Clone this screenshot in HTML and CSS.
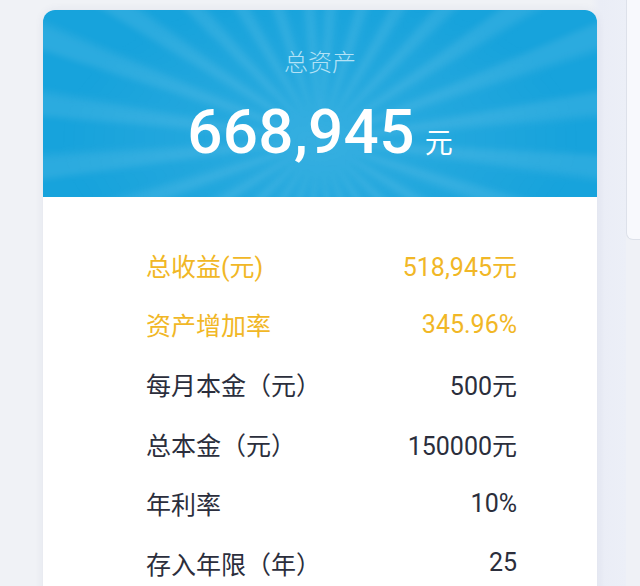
FILE: index.html
```html
<!DOCTYPE html>
<html lang="zh">
<head>
<meta charset="utf-8">
<title>总资产</title>
<link rel="stylesheet" href="styles.css">
</head>
<body>
<div class="page">
  <main class="main">
    <section class="card">
      <header class="hero">
        <div class="hero-title">总资产</div>
        <div class="hero-amount"><span class="num">668,945</span><span class="unit">元</span></div>
      </header>
      <div class="rows">
        <div class="row gold"><span class="label">总收益(元)</span><span class="value">518,945元</span></div>
        <div class="row gold"><span class="label">资产增加率</span><span class="value">345.96%</span></div>
        <div class="row"><span class="label">每月本金（元）</span><span class="value">500元</span></div>
        <div class="row"><span class="label">总本金（元）</span><span class="value">150000元</span></div>
        <div class="row"><span class="label">年利率</span><span class="value">10%</span></div>
        <div class="row"><span class="label">存入年限（年）</span><span class="value">25</span></div>
      </div>
    </section>
  </main>
  <aside class="side"></aside>
</div>
</body>
</html>
```

FILE: styles.css
```css
html, body {
  margin: 0;
  padding: 0;
}
body {
  background: #eff1f6;
  font-family: "Roboto", "Noto Sans CJK SC", sans-serif;
  height: 586px;
  overflow: hidden;
}
.page {
  display: flex;
  height: 586px;
}
.main {
  width: 626px;
  flex: none;
  background: linear-gradient(to right, #f0f2f6 0, #f0f2f6 590px, #eaedf6 600px, #eceff7 626px);
  padding-top: 10px;
  box-sizing: border-box;
}
.card {
  margin-left: 43px;
  width: 554px;
  height: 600px;
  background: #ffffff;
  border-radius: 12px 12px 0 0;
  box-shadow: 0 0 10px rgba(40, 60, 110, 0.07);
  overflow: hidden;
}
.hero {
  position: relative;
  height: 187px;
  background: #17a3dc;
  text-align: center;
  color: #ffffff;
  overflow: hidden;
}
.hero::before {
  content: "";
  position: absolute;
  left: -60px;
  right: -60px;
  top: -60px;
  bottom: -60px;
  background:
    radial-gradient(ellipse at 50% 62%, rgba(255,255,255,0.10) 0, rgba(255,255,255,0) 55%),
    repeating-conic-gradient(from 2deg at 50% 62%, rgba(255,255,255,0.09) 0deg 4deg, rgba(255,255,255,0) 6deg 10deg, rgba(255,255,255,0) 10deg 13deg);
  filter: blur(3px);
}
.hero-title,
.hero-amount {
  position: relative;
}
.hero-title {
  padding-top: 36px;
  font-size: 24px;
  line-height: 30px;
  color: #b3e2f6;
  font-family: "Noto Sans CJK SC", sans-serif;
  font-weight: 300;
}
.hero-amount {
  margin-top: 20px;
  display: flex;
  justify-content: center;
  align-items: baseline;
  line-height: 72px;
}
.num {
  font-size: 62px;
  font-weight: 500;
  letter-spacing: 0.3px;
}
.unit {
  font-family: "Noto Sans CJK SC", sans-serif;
  font-size: 28px;
  margin-left: 10px;
  font-weight: 400;
}
.rows {
  padding: 38px 80px 0 103px;
}
.row {
  display: flex;
  justify-content: space-between;
  align-items: center;
  height: 59.6px;
  font-size: 25px;
  color: #2b2e3c;
}
.row.gold {
  color: #f1b726;
}
.side {
  flex: 1;
  height: 240px;
  background: #f8f9fd;
  border-left: 1px solid #dde1ea;
  border-bottom: 1px solid #dde1ea;
  border-bottom-left-radius: 7px;
  box-sizing: border-box;
}
```
